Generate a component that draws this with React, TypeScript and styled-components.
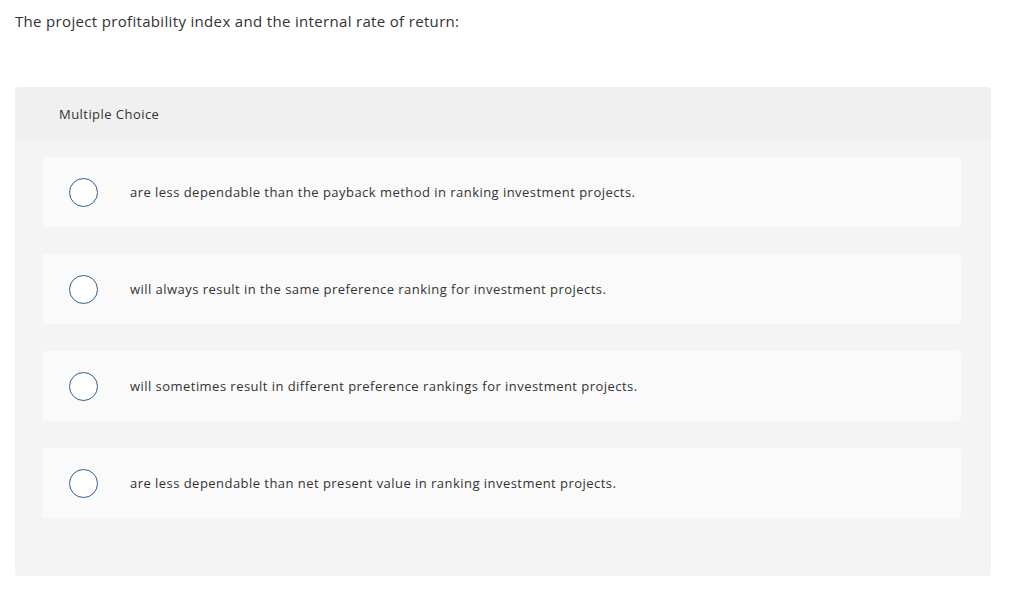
import React from "react";
import styled, { createGlobalStyle } from "styled-components";

const Global = createGlobalStyle`
  html, body { margin: 0; padding: 0; background: #ffffff; }
  body { font-family: "Open Sans", Lato, sans-serif; color: #333333; font-variant-ligatures: none; }
`;

const Page = styled.div`
  padding: 10px 33px 0 15px;
  display: flex;
  flex-direction: column;
`;

const Question = styled.p`
  margin: 0;
  font-size: 15px;
  line-height: 22px;
  letter-spacing: 0.33px;
  color: #333;
  height: 77px;
`;

const Panel = styled.section`
  background: #f4f4f4;
  border-radius: 4px;
  display: flex;
  flex-direction: column;
  height: 489px;
`;

const PanelHeader = styled.div`
  background: #f0f0f0;
  border-radius: 4px 4px 0 0;
  height: 53px;
  display: flex;
  align-items: center;
  padding-left: 44px;
  font-size: 13px;
  letter-spacing: 0.45px;
  color: #333;
`;

const Options = styled.div`
  display: flex;
  flex-direction: column;
  gap: 27px;
  padding: 17px 30px 0 27px;
`;

const Option = styled.label`
  background: #fafafa;
  border-radius: 4px;
  height: 70px;
  display: flex;
  align-items: center;
  padding-left: 27px;
  cursor: pointer;
`;

const Radio = styled.span`
  width: 27px;
  height: 27px;
  border: 1.5px solid #2b5d94;
  border-radius: 50%;
  background: #ffffff;
  flex: none;
`;

const OptionText = styled.span`
  margin-left: 32px;
  font-size: 13px;
  letter-spacing: 0.46px;
  color: #333;
`;

const choices = [
  "are less dependable than the payback method in ranking investment projects.",
  "will always result in the same preference ranking for investment projects.",
  "will sometimes result in different preference rankings for investment projects.",
  "are less dependable than net present value in ranking investment projects.",
];

export default function App() {
  return (
    <>
      <Global />
      <Page>
        <Question>The project profitability index and the internal rate of return:</Question>
        <Panel>
          <PanelHeader>Multiple Choice</PanelHeader>
          <Options>
            {choices.map((c) => (
              <Option key={c}>
                <Radio />
                <OptionText>{c}</OptionText>
              </Option>
            ))}
          </Options>
        </Panel>
      </Page>
    </>
  );
}
